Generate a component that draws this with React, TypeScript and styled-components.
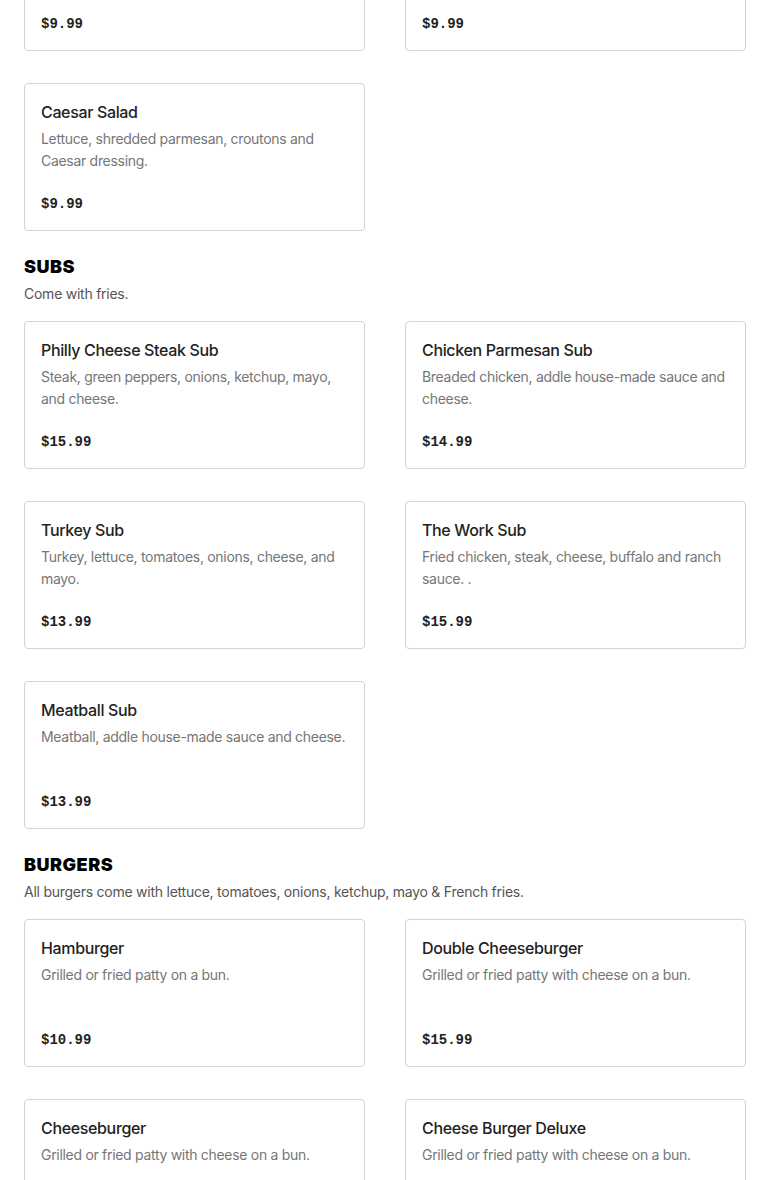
import React from "react";
import styled, { createGlobalStyle } from "styled-components";

const Global = createGlobalStyle`
  html, body { margin: 0; padding: 0; background: #fff; }
  body { font-family: Inter, "Noto Sans", sans-serif; -webkit-font-smoothing: antialiased; }
  * { box-sizing: border-box; }
`;

const Page = styled.div`
  width: 770px;
  padding: 0 24px;
  margin-top: -97px;
  display: flex;
  flex-direction: column;
`;

const Section = styled.section`
  display: flex;
  flex-direction: column;
  margin-bottom: 24px;
`;

const Heading = styled.h2`
  margin: 0;
  font-family: Inter, sans-serif;
  font-weight: 900;
  font-size: 18px;
  line-height: 24px;
  color: #000;
  text-transform: uppercase;
  letter-spacing: 0.5px;
`;

const Note = styled.p`
  margin: 4px 0 16px;
  font-size: 14px;
  line-height: 22px;
  letter-spacing: -0.25px;
  color: #555;
`;

const Grid = styled.div`
  display: grid;
  grid-template-columns: 341px 341px;
  column-gap: 40px;
  row-gap: 32px;
`;

const Card = styled.div`
  height: 148px;
  border: 1px solid #d3d3d3;
  border-radius: 4px;
  padding: 16px 16px 15px;
  display: flex;
  flex-direction: column;
  background: #fff;
`;

const Title = styled.h3`
  margin: 0 0 4px;
  font-size: 16px;
  font-weight: 500;
  line-height: 24px;
  letter-spacing: -0.35px;
  color: #222;
`;

const Desc = styled.p`
  margin: 0;
  min-height: 44px;
  font-size: 14px;
  line-height: 22px;
  letter-spacing: -0.3px;
  color: #767676;
`;

const Price = styled.div`
  margin-top: auto;
  font-family: "Liberation Mono", "DejaVu Sans Mono", monospace;
  font-weight: 700;
  font-size: 14px;
  line-height: 22px;
  color: #222;
`;

type Item = { name: string; desc: string; price: string };

const sections: { title?: string; note?: string; items: Item[] }[] = [
  {
    items: [
      { name: "Garden Salad", desc: "Lettuce, tomatoes, cucumbers, onions and dressing.", price: "$9.99" },
      { name: "Chef Salad", desc: "Lettuce, ham, turkey, cheese, egg and dressing.", price: "$9.99" },
      { name: "Caesar Salad", desc: "Lettuce, shredded parmesan, croutons and Caesar dressing.", price: "$9.99" },
    ],
  },
  {
    title: "Subs",
    note: "Come with fries.",
    items: [
      { name: "Philly Cheese Steak Sub", desc: "Steak, green peppers, onions, ketchup, mayo, and cheese.", price: "$15.99" },
      { name: "Chicken Parmesan Sub", desc: "Breaded chicken, addle house-made sauce and cheese.", price: "$14.99" },
      { name: "Turkey Sub", desc: "Turkey, lettuce, tomatoes, onions, cheese, and mayo.", price: "$13.99" },
      { name: "The Work Sub", desc: "Fried chicken, steak, cheese, buffalo and ranch sauce. .", price: "$15.99" },
      { name: "Meatball Sub", desc: "Meatball, addle house-made sauce and cheese.", price: "$13.99" },
    ],
  },
  {
    title: "Burgers",
    note: "All burgers come with lettuce, tomatoes, onions, ketchup, mayo & French fries.",
    items: [
      { name: "Hamburger", desc: "Grilled or fried patty on a bun.", price: "$10.99" },
      { name: "Double Cheeseburger", desc: "Grilled or fried patty with cheese on a bun.", price: "$15.99" },
      { name: "Cheeseburger", desc: "Grilled or fried patty with cheese on a bun.", price: "$11.99" },
      { name: "Cheese Burger Deluxe", desc: "Grilled or fried patty with cheese on a bun.", price: "$13.99" },
    ],
  },
];

export default function App() {
  return (
    <>
      <Global />
      <Page>
        {sections.map((s, i) => (
          <Section key={i}>
            {s.title && <Heading>{s.title}</Heading>}
            {s.note && <Note>{s.note}</Note>}
            <Grid>
              {s.items.map((it) => (
                <Card key={it.name}>
                  <Title>{it.name}</Title>
                  <Desc>{it.desc}</Desc>
                  <Price>{it.price}</Price>
                </Card>
              ))}
            </Grid>
          </Section>
        ))}
      </Page>
    </>
  );
}
